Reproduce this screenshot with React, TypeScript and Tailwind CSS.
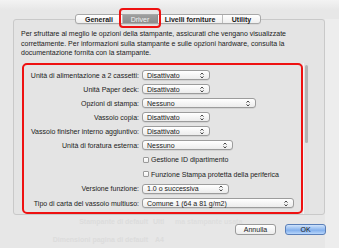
import React from "react";

const font = { fontFamily: '"Liberation Sans", Arial, sans-serif' };

function Arrows() {
  return (
    <svg width="4" height="7" viewBox="0 0 4 7" className="shrink-0">
      <path d="M0.5 2.6 L2 1 L3.5 2.6" fill="none" stroke="#333" strokeWidth="0.9" />
      <path d="M0.5 4.4 L2 6 L3.5 4.4" fill="none" stroke="#333" strokeWidth="0.9" />
    </svg>
  );
}

function Popup({ text, w }: { text: string; w: string }) {
  return (
    <div
      className={`${w} h-[10px] flex items-center justify-between pl-[4px] pr-[5px] rounded-[3px] border border-[#9c9c9c] bg-[linear-gradient(#ffffff,#ececec)] text-[7px] leading-none text-[#1a1a1a] shadow-[0_0.5px_0_rgba(0,0,0,0.15)]`}
    >
      <span className="whitespace-nowrap">{text}</span>
      <Arrows />
    </div>
  );
}

function Row({ label, children, h }: { label: string; children: React.ReactNode; h: string }) {
  return (
    <div className={`flex items-center ${h}`}>
      <div className="w-[117px] text-right text-[7px] leading-none text-[#222] whitespace-nowrap pr-[2px]">{label}</div>
      <div className="ml-[1px]">{children}</div>
    </div>
  );
}

function Check({ label, h }: { label: string; h: string }) {
  return (
    <div className={`flex items-center ${h}`}>
      <div className="w-[117px]" />
      <div className="ml-[2px] w-[6px] h-[6px] rounded-[1px] border border-[#9a9a9a] bg-[linear-gradient(#fff,#eee)]" />
      <span className="ml-[2px] text-[7px] leading-none text-[#222] whitespace-nowrap">{label}</span>
    </div>
  );
}

export default function App() {
  return (
    <div
      className="relative w-[339px] h-[248px] overflow-hidden bg-[linear-gradient(#f3f3f3_0px,#e7e7e7_10px,#e7e7e7_100%)]"
      style={font}
    >
      {/* right lighter strip */}
      <div className="absolute right-0 top-[19px] bottom-0 w-[14px] bg-[#ededed]" />

      {/* ghost background texts */}
      <div className="absolute left-[70px] top-[217px] w-[78px] text-right text-[7px] text-[#dcdcdc] font-bold whitespace-nowrap">Stampante di default</div>
      <div className="absolute left-[153px] top-[217px] text-[7px] text-[#dcdcdc] font-bold">Ulti</div>
      <div className="absolute left-[175px] top-[217px] text-[7px] text-[#dedede] font-bold whitespace-nowrap">ma stampante usata</div>
      <div className="absolute left-[36px] top-[235px] w-[112px] text-right text-[7px] text-[#dcdcdc] font-bold whitespace-nowrap">Dimensioni pagina di default</div>
      <div className="absolute left-[155px] top-[235px] text-[7px] text-[#dcdcdc] font-bold">A4</div>

      <div className="relative pt-[19px] pl-[13px]">
        {/* tab panel box */}
        <div className="relative w-[312px] h-[196px] border border-[#c9c9c9] rounded-[3px] bg-[#e4e4e4]">
          {/* tabs */}
          <div className="absolute left-[61px] top-[-6px] flex h-[10px] rounded-[3px] border border-[#a8a8a8] bg-[linear-gradient(#ffffff,#efefef)] text-[7px] leading-none text-[#1a1a1a] shadow-[0_0.5px_0.5px_rgba(0,0,0,0.1)]">
            <div className="w-[47px] flex items-center justify-center font-bold border-r border-[#bdbdbd]">Generali</div>
            <div className="w-[34px] flex items-center justify-center bg-[linear-gradient(#9e9e9e,#8c8c8c)] text-[#f2f2f2]">Driver</div>
            <div className="w-[66px] flex items-center justify-center font-bold border-r border-[#bdbdbd] border-l border-l-[#8c8c8c]">Livelli forniture</div>
            <div className="w-[37px] flex items-center justify-center font-bold">Utility</div>
          </div>

          {/* description */}
          <div className="pt-[9px] pl-[7px] text-[7px] leading-[9.5px] text-[#222]">
            <div className="whitespace-nowrap">Per sfruttare al meglio le opzioni della stampante, assicurati che vengano visualizzate</div>
            <div className="whitespace-nowrap">correttamente. Per informazioni sulla stampante e sulle opzioni hardware, consulta la</div>
            <div className="whitespace-nowrap">documentazione fornita con la stampante.</div>
          </div>

          {/* scroll view */}
          <div className="absolute left-[8px] top-[43px] w-[287px] h-[151px] flex">
            <div className="flex-1 pt-[5px] pl-[2px]">
              <Row label="Unità di alimentazione a 2 cassetti:" h="h-[14px]"><Popup text="Disattivato" w="w-[68px]" /></Row>
              <Row label="Unità Paper deck:" h="h-[14px]"><Popup text="Disattivato" w="w-[68px]" /></Row>
              <Row label="Opzioni di stampa:" h="h-[14px]"><Popup text="Nessuno" w="w-[114px]" /></Row>
              <Row label="Vassoio copia:" h="h-[14px]"><Popup text="Disattivato" w="w-[68px]" /></Row>
              <Row label="Vassoio finisher interno aggiuntivo:" h="h-[14px]"><Popup text="Disattivato" w="w-[68px]" /></Row>
              <Row label="Unità di foratura esterna:" h="h-[14px]"><Popup text="Nessuno" w="w-[91px]" /></Row>
              <Check label="Gestione ID dipartimento" h="h-[15px]" />
              <Check label="Funzione Stampa protetta della periferica" h="h-[14px]" />
              <Row label="Versione funzione:" h="h-[15px]"><Popup text="1.0 o successiva" w="w-[87px]" /></Row>
              <Row label="Tipo di carta del vassoio multiuso:" h="h-[14px]"><Popup text="Comune 1 (64 a 81 g/m2)" w="w-[152px]" /></Row>
            </div>
            {/* scrollbar */}
            <div className="w-[6px] h-full border-l border-[#f4f4f4] bg-[#e2e2e2] pt-[2px] flex justify-center">
              <div className="w-[3px] h-[78px] rounded-full bg-[#b3b3b3]" />
            </div>
          </div>
        </div>
      </div>

      {/* red annotation around scroll content */}
      <div className="absolute left-[22px] top-[63px] w-[281px] h-[151px] rounded-[5px] border-2 border-[#ee1111]" />
      {/* red annotation around Driver tab */}
      <div className="absolute left-[119px] top-[8px] w-[42px] h-[20px] rounded-[4px] border-2 border-[#ee1111]" />

      {/* buttons */}
      <div className="absolute left-[235px] top-[224px] flex gap-[9px]">
        <div className="w-[41px] h-[11px] rounded-[3px] border border-[#9a9a9a] bg-[linear-gradient(#ffffff,#ececec)] text-[7px] leading-none flex items-center justify-center text-[#1a1a1a]">Annulla</div>
        <div className="w-[41px] h-[11px] rounded-[3px] border border-[#5a7fb8] bg-[linear-gradient(#cfe3fb,#8fb8ef_50%,#7aa9ea_51%,#b8d6fb)] text-[7px] leading-none flex items-center justify-center text-[#1a1a1a]">OK</div>
      </div>
    </div>
  );
}
